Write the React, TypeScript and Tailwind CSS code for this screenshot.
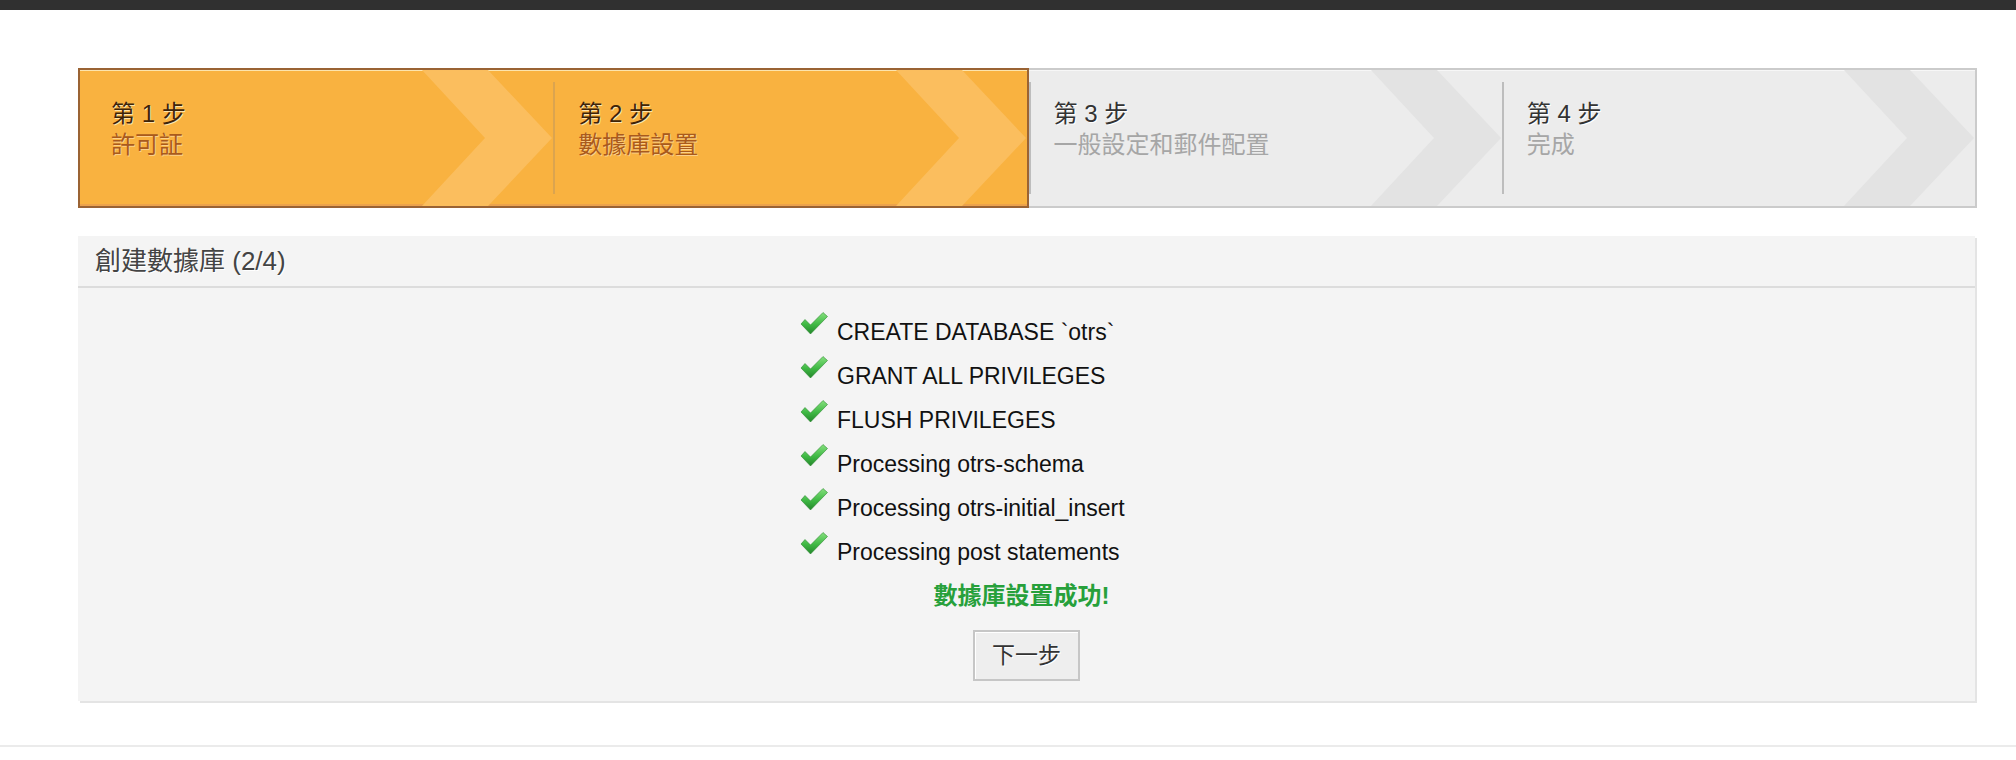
import React from 'react';

const font = "font-['Liberation_Sans','Noto_Sans_CJK_TC',sans-serif]";

const steps = [
  { title: '第 1 步', sub: '許可証', active: true },
  { title: '第 2 步', sub: '數據庫設置', active: true },
  { title: '第 3 步', sub: '一般設定和郵件配置', active: false },
  { title: '第 4 步', sub: '完成', active: false },
];

const results = [
  'CREATE DATABASE `otrs`',
  'GRANT ALL PRIVILEGES',
  'FLUSH PRIVILEGES',
  'Processing otrs-schema',
  'Processing otrs-initial_insert',
  'Processing post statements',
];

const Chevron = ({ color }: { color: string }) => (
  <svg className="absolute right-0 top-0 h-full w-[131px]" viewBox="0 0 131 136" preserveAspectRatio="none">
    <polygon points="0,0 66,0 130,68 66,136 0,136 63,68" fill={color} />
  </svg>
);

const Check = () => (
  <svg width="28" height="23" viewBox="0 0 28 23" className="mt-[2px] shrink-0">
    <defs>
      <linearGradient id="ck" x1="0" y1="0" x2="0" y2="1">
        <stop offset="0" stopColor="#86e07e" />
        <stop offset="0.55" stopColor="#3fb944" />
        <stop offset="1" stopColor="#24862b" />
      </linearGradient>
    </defs>
    <polygon points="1,12 5,7.5 10.5,13 23,0.5 27.5,4.5 10.5,22" fill="url(#ck)" stroke="#2c8a30" strokeWidth="0.6" strokeLinejoin="round" />
  </svg>
);

const Step = ({ i }: { i: number }) => {
  const s = steps[i];
  const box = s.active
    ? 'bg-[#f9b240] border-[#9a6334] shadow-[inset_0_1px_0_#fde4ad,inset_0_-2px_0_#eca24c]'
    : 'bg-[#ececec] border-[#cbcbcb] shadow-[inset_0_1px_0_#f7f7f7]';
  const edge = i === 0 ? 'border-l-2' : i === 1 || i === 3 ? 'border-r-2' : '';
  return (
    <div className={`relative flex flex-1 overflow-hidden border-y-2 ${box} ${edge}`}>
      <Chevron color={s.active ? '#fbbe5e' : '#e3e3e3'} />
      {i > 0 && (
        <div className={`relative self-center h-[112px] w-[2px] ${s.active ? 'bg-[#dba44f]' : 'bg-[#bdbdbd] w-[1px]'}`} />
      )}
      <div className={`relative pt-[28px] text-[24px] leading-[31px] ${i === 0 ? 'pl-[31px]' : 'pl-[23px]'}`}>
        <div
          className={
            s.active
              ? 'text-[#3e2408] [text-shadow:1px_1px_0_#fde3ac]'
              : 'text-[#333] [text-shadow:1px_1px_0_#ffffff]'
          }
        >
          {s.title}
        </div>
        <div className={s.active ? 'text-[#a95a1c] [text-shadow:1px_1px_0_#fcd08a]' : 'text-[#a6a6a6]'}>{s.sub}</div>
      </div>
    </div>
  );
};

export default function App() {
  return (
    <div className={`min-h-[760px] bg-white ${font}`}>
      <div className="h-[10px] bg-[#303030]" />
      <div className="ml-[78px] mr-[39px] mt-[58px]">
        <div className="flex h-[140px]">
          {steps.map((_, i) => (
            <Step key={i} i={i} />
          ))}
        </div>

        <div className="mt-[28px] mr-[2px] bg-[#f4f4f4] shadow-[2px_2px_0_#e4e4e4]">
          <div className="h-[52px] border-b-2 border-[#dcdcdc] pl-[17px] text-[26px] leading-[50px] text-[#444] [text-shadow:1px_1px_0_#ffffff]">
            創建數據庫 (2/4)
          </div>
          <div className="pt-[22px] pb-[20px]">
            <div className="pl-[722px]">
              {results.map((r) => (
                <div key={r} className="flex h-[44px] items-start">
                  <Check />
                  <span className="ml-[9px] text-[23px] leading-[44px] text-[#111]">{r}</span>
                </div>
              ))}
            </div>
            <div className="mt-[6px] pr-[10px] text-center text-[24px] font-bold leading-[32px] text-[#27a03b]">
              數據庫設置成功!
            </div>
            <div className="mt-[18px] flex justify-center">
              <button className="h-[51px] w-[107px] border-2 border-[#c6c6c6] bg-[#eeeeee] text-[23px] text-[#333] shadow-[inset_1px_1px_0_#ffffff] [text-shadow:1px_1px_0_#ffffff]">
                下一步
              </button>
            </div>
          </div>
        </div>
      </div>
      <div className="mt-[44px] h-[2px] bg-[#ebebeb]" />
    </div>
  );
}
